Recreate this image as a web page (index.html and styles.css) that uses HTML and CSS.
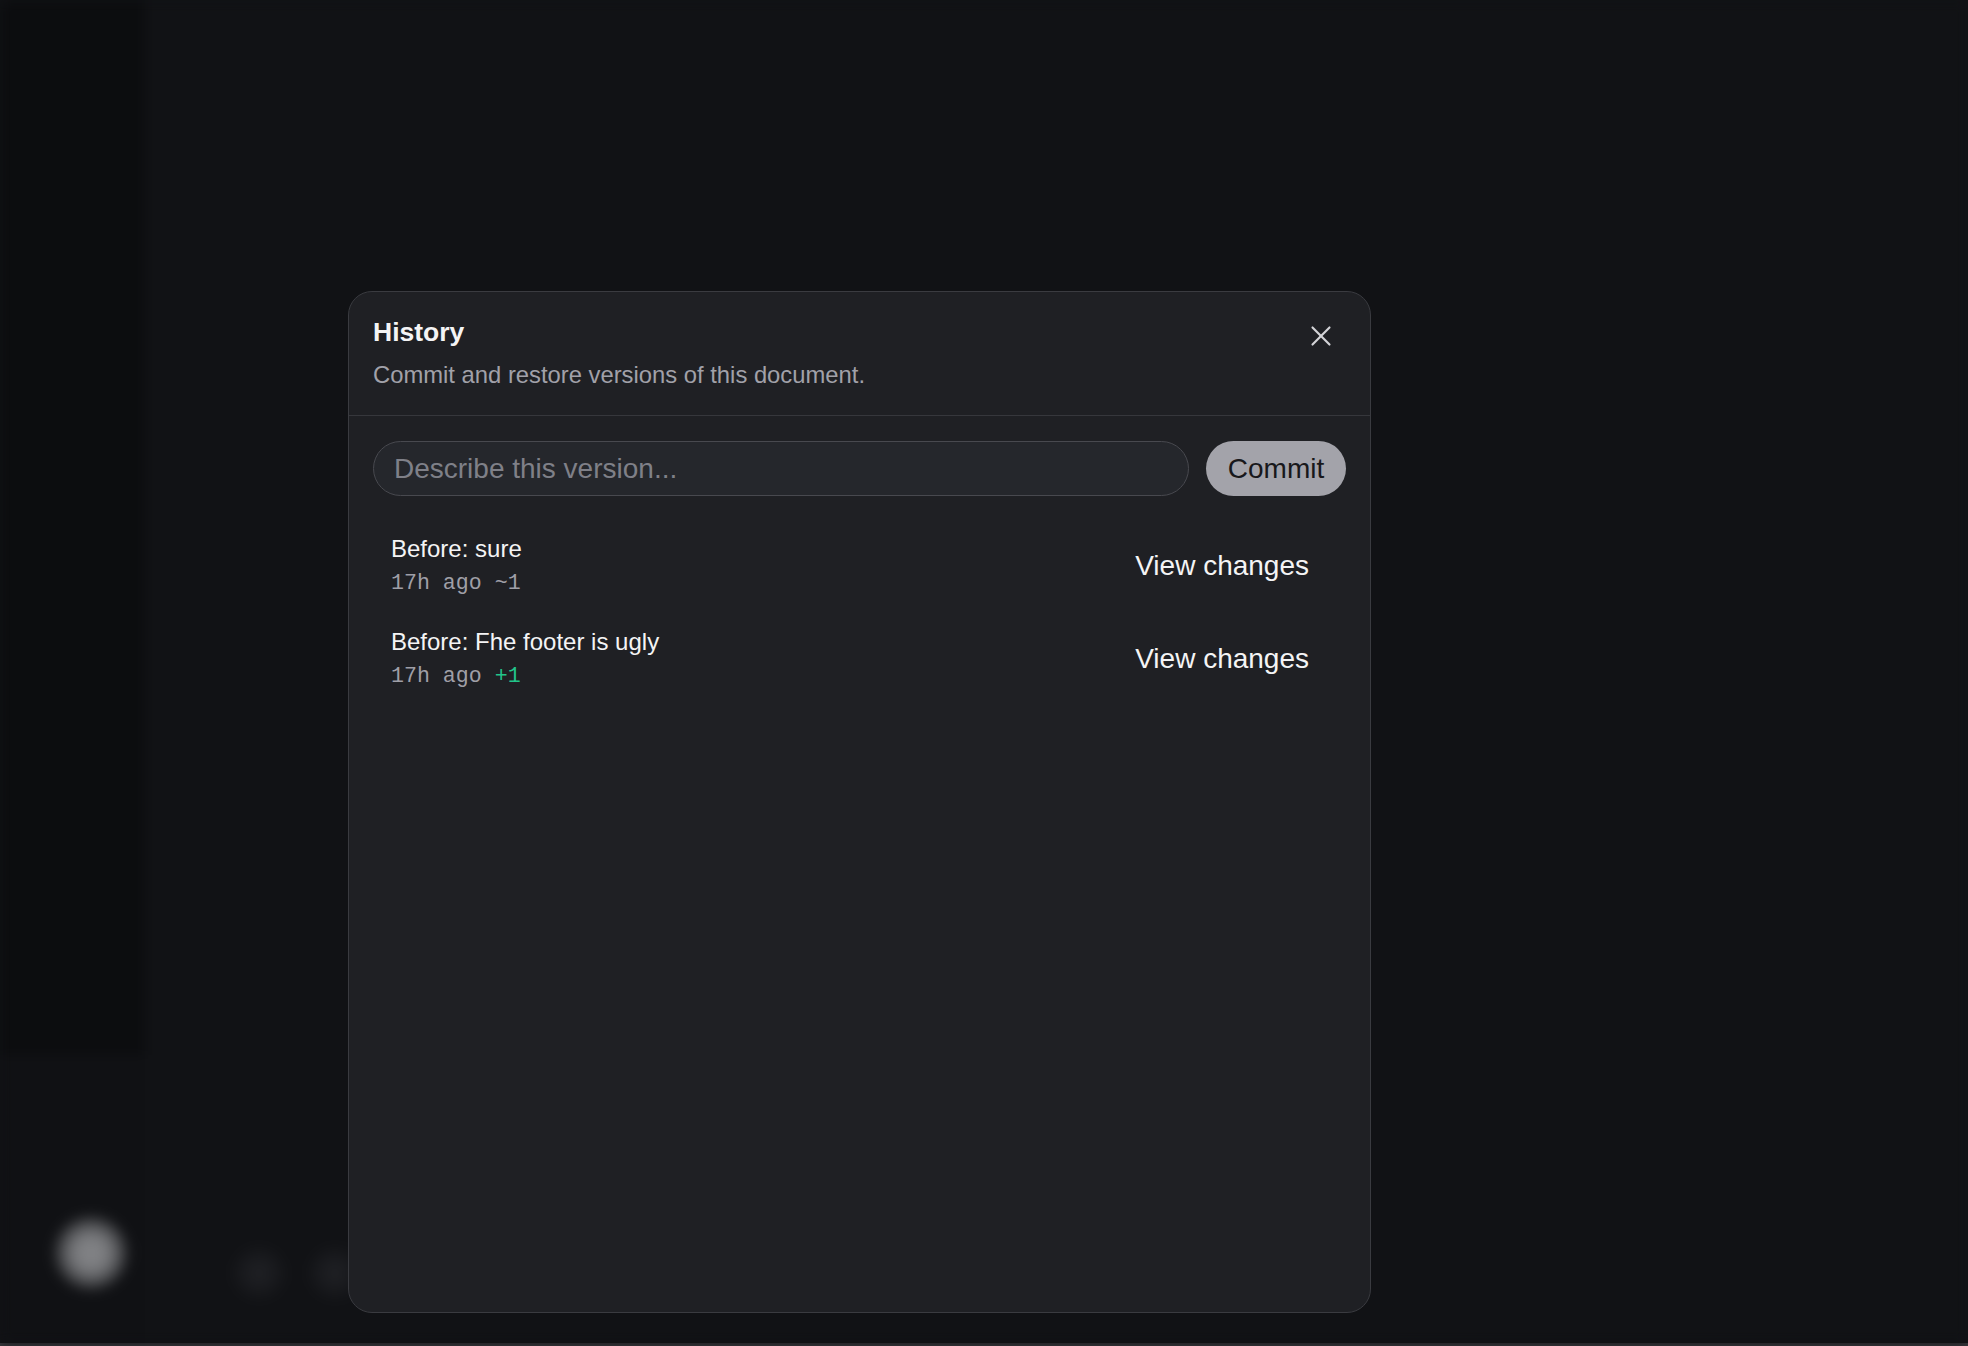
FILE: index.html
```html
<!DOCTYPE html>
<html>
    <head>
        <title>History</title>
        <link rel="stylesheet" href="styles.css">
    </head>

    <body>

        <div class="page">
            <div class="app">
                <aside class="sidebar">
                    <div class="side-top"></div>
                    <div class="side-foot"><span class="avatar"></span></div>
                </aside>
                <main class="main">
                    <div class="main-body"></div>
                    <div class="main-foot">
                        <span class="dot"></span>
                        <span class="dot"></span>
                    </div>
                </main>
            </div><!--app-->
            <div class="statusbar"></div>
        </div><!--page-->

        <div class="dialog">
            <div class="dialog-head">
                <div>
                    <h2 class="title">History</h2>
                    <p class="desc">Commit and restore versions of this document.</p>
                </div>
                <button class="close" aria-label="Close">
                    <svg width="34" height="34" viewBox="0 0 24 24" fill="none" stroke="currentColor" stroke-width="1.5" stroke-linecap="round">
                        <path d="M18 6 6 18"/>
                        <path d="M6 6l12 12"/>
                    </svg>
                </button>
            </div>

            <div class="dialog-body">
                <form class="commit-row">
                    <input type="text" class="msg" placeholder="Describe this version...">
                    <button class="commit">Commit</button>
                </form>

                <ul class="versions">
                    <li class="version">
                        <div>
                            <p class="v-title">Before: sure</p>
                            <p class="v-meta">17h ago ~1</p>
                        </div>
                        <button class="view">View changes</button>
                    </li>
                    <li class="version">
                        <div>
                            <p class="v-title">Before: Fhe footer is ugly</p>
                            <p class="v-meta">17h ago <span class="add">+1</span></p>
                        </div>
                        <button class="view">View changes</button>
                    </li>
                </ul>
            </div>
        </div><!--dialog-->

    </body>
</html>
```

FILE: styles.css
```css
*{margin:0;padding:0;}

body{
    background-color: #111215;
    overflow: hidden;
    font-family: "Liberation Sans", Arial, sans-serif;
}

/* blurred app behind the dialog */
.page{
    height: 100vh;
    display: grid;
    grid-template-rows: 1fr 3px;
}

.app{
    display: grid;
    grid-template-columns: 145px 1fr;
    filter: blur(6px);
    overflow: hidden;
}

.sidebar{
    display: flex;
    flex-direction: column;
}

.side-top{
    flex: 1;
    background-color: #0c0d0f;
}

.side-foot{
    height: 288px;
    background-color: #101114;
    padding: 157px 0 0 50px;
    box-sizing: border-box;
}

.avatar{
    display: block;
    width: 82px;
    height: 82px;
    border-radius: 50%;
    background: radial-gradient(circle, #858689 0%, #77787b 30%, rgba(90,91,94,0.75) 52%, rgba(40,41,44,0.4) 66%, rgba(17,18,21,0) 72%);
}

.main{
    display: flex;
    flex-direction: column;
    background-color: #111215;
}

.main-body{
    flex: 1;
}

.main-foot{
    height: 288px;
    display: flex;
    gap: 16px;
    padding: 188px 0 0 84px;
    box-sizing: border-box;
}

.dot{
    width: 60px;
    height: 60px;
    border-radius: 50%;
    background: radial-gradient(circle, #202125 0%, rgba(30,31,35,0.5) 45%, rgba(17,18,21,0) 70%);
}

.statusbar{
    background-color: #3a3b3f;
}

/* dialog */
.dialog{
    position: fixed;
    left: 348px;
    top: 291px;
    width: 1023px;
    height: 1022px;
    box-sizing: border-box;
    background-color: #1f2024;
    border: 1px solid #3a3b40;
    border-radius: 24px;
    display: flex;
    flex-direction: column;
    color: #f4f4f5;
}

.dialog-head{
    display: flex;
    justify-content: space-between;
    align-items: flex-start;
    padding: 24px 24px 25px;
    border-bottom: 1px solid #36373c;
}

.title{
    font-size: 26.5px;
    line-height: 32px;
    font-weight: 700;
}

.desc{
    margin-top: 12px;
    font-size: 23.8px;
    line-height: 30px;
    color: #a1a1a9;
}

.close{
    width: 50px;
    height: 48px;
    margin-top: -4px;
    display: flex;
    align-items: center;
    justify-content: center;
    background-color: transparent;
    border: 0;
    color: #d4d4d8;
}

.dialog-body{
    padding: 25px 24px;
}

.commit-row{
    display: flex;
    gap: 17px;
}

.msg{
    flex: 1;
    height: 55px;
    box-sizing: border-box;
    border: 1.5px solid #48494f;
    border-radius: 999px;
    background-color: #25272c;
    padding: 0 20px;
    font-family: inherit;
    font-size: 28px;
    color: #f4f4f5;
    outline: none;
}

.msg::placeholder{
    color: #7f8088;
}

.commit{
    width: 140px;
    height: 55px;
    border: 0;
    border-radius: 999px;
    background-color: #a3a3aa;
    color: #18181b;
    font-family: inherit;
    font-size: 28px;
}

.versions{
    list-style: none;
    margin-top: 23px;
}

.version{
    display: flex;
    align-items: center;
    justify-content: space-between;
    padding: 15px 20px 14px 18px;
}

.v-title{
    font-size: 24px;
    line-height: 30px;
    color: #f4f4f5;
}

.v-meta{
    margin-top: 4px;
    font-family: "Liberation Mono", "DejaVu Sans Mono", monospace;
    font-size: 21.6px;
    line-height: 30px;
    color: #9f9fa7;
}

.add{
    color: #22c48a;
}

.view{
    background-color: transparent;
    border: 0;
    padding: 0 17px;
    font-family: inherit;
    font-size: 28px;
    line-height: 40px;
    color: #f4f4f5;
}
```
